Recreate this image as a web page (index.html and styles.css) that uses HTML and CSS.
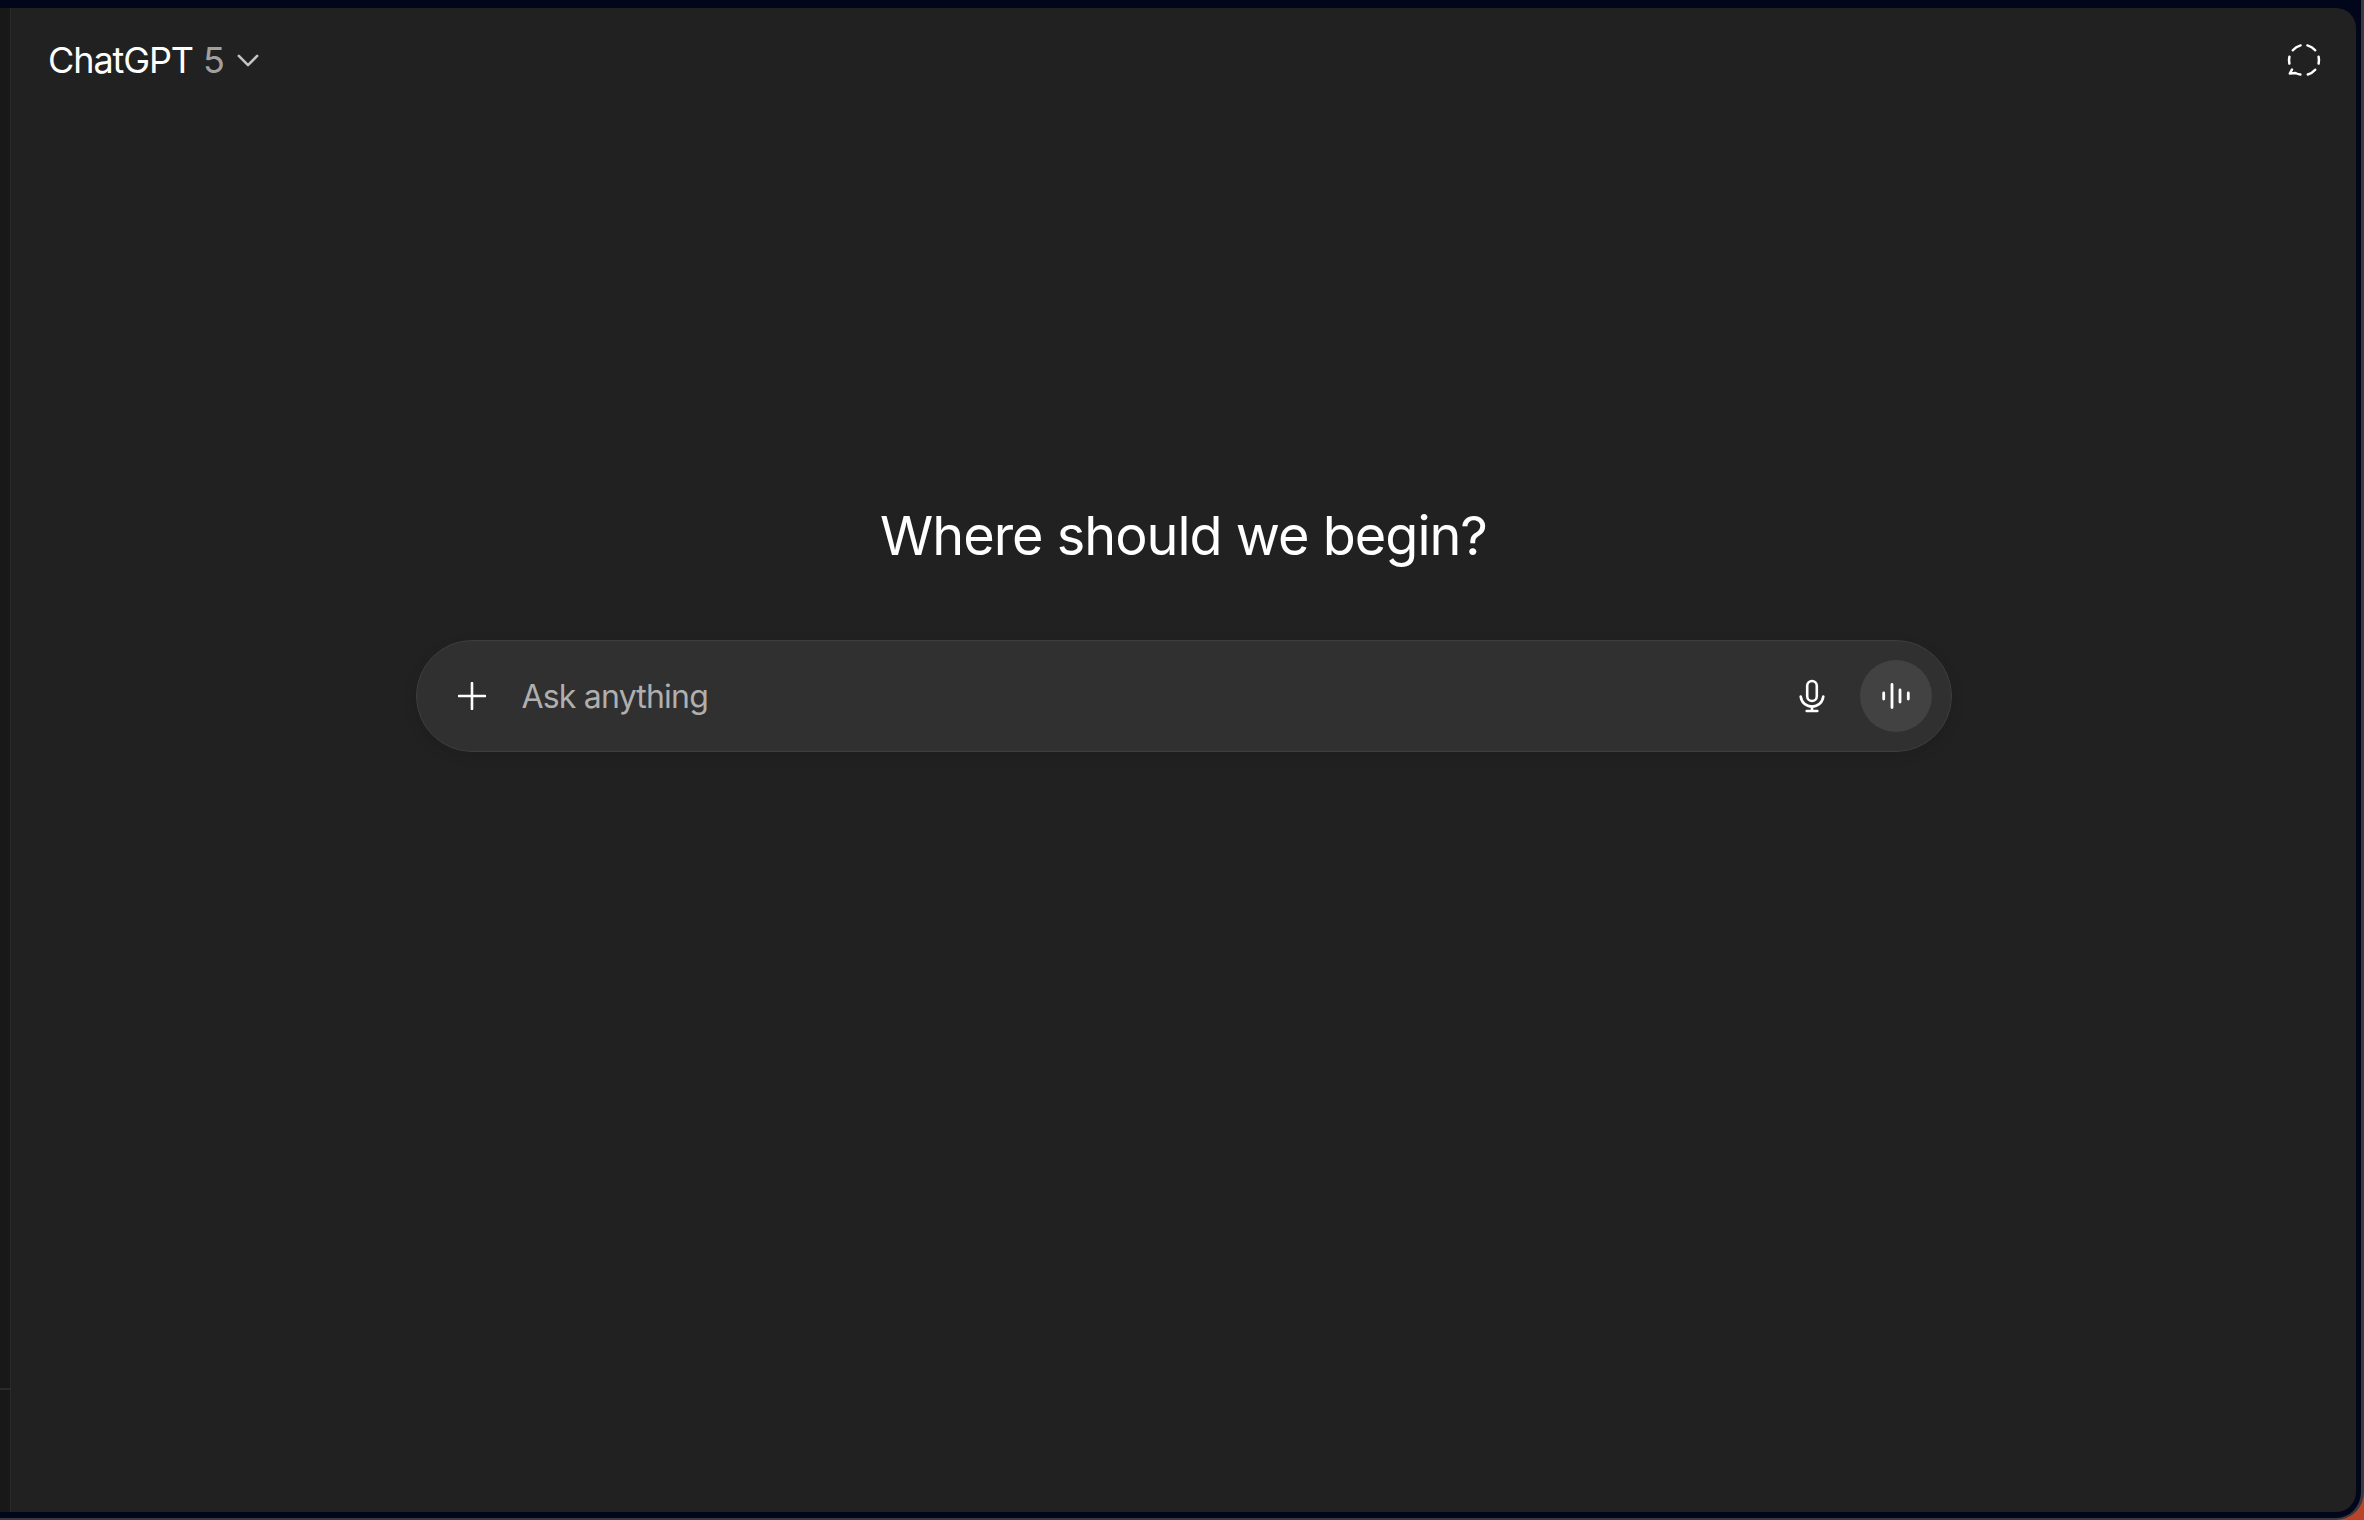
FILE: index.html
```html
<!DOCTYPE html>
<html lang="en">
<head>
    <meta charset="utf-8">
    <meta name="viewport" content="width=device-width, initial-scale=1">
    <title>ChatGPT</title>
    <link rel="stylesheet" href="styles.css">
</head>
<body>
    <div class="frame">
        <aside class="sidebar">
            <div class="sidebar-top"></div>
            <div class="sidebar-bottom"></div>
        </aside>

        <main class="main">
            <header class="topbar">
                <button class="model-btn">
                    <span class="model-name">ChatGPT</span>
                    <span class="model-version">5</span>
                    <svg class="chevron" viewBox="0 0 24 14" fill="none" stroke="#c4c4c4" stroke-width="2.800" stroke-linecap="round" stroke-linejoin="round">
                        <path d="M2 2l10 10L22 2"/>
                    </svg>
                </button>
                <button class="temp-btn" aria-label="Temporary chat">
                    <svg viewBox="0 0 36 36" width="36" height="36" fill="none" stroke="#fff" stroke-width="2.500" stroke-linecap="round" stroke-linejoin="round">
                        <path d="M6.800 8.200A15 15 0 0 1 14.600 3.400"/>
                        <path d="M21.400 3.400A15 15 0 0 1 29.200 8.200"/>
                        <path d="M32.600 14.800A15 15 0 0 1 32.600 21.600"/>
                        <path d="M29.200 27.800A15 15 0 0 1 21.800 32.500"/>
                        <path d="M14.400 32.500A15 15 0 0 1 9.500 31L3.800 31.600 6 27.500"/>
                        <path d="M3.400 21.600A15 15 0 0 1 3.400 14.800"/>
                    </svg>
                </button>
            </header>

            <section class="center">
                <h1 class="title">Where should we begin?</h1>
                <div class="composer">
                    <button class="plus-btn" aria-label="Add files">
                        <svg viewBox="0 0 28 28" width="28" height="28" fill="none" stroke="#fff" stroke-width="2.600" stroke-linecap="round">
                            <path d="M14 1v26M1 14h26"/>
                        </svg>
                    </button>
                    <span class="placeholder">Ask anything</span>
                    <button class="mic-btn" aria-label="Dictate">
                        <svg viewBox="0 0 32 36" width="32" height="36" fill="none" stroke="#fff" stroke-width="2.600" stroke-linecap="round" stroke-linejoin="round">
                            <rect x="11.200" y="3" width="9.600" height="20" rx="4.800"/>
                            <path d="M4.700 18.500C5.500 24.500 10 28.500 16 28.500s10.500-4 11.300-10"/>
                            <path d="M16 28.500V33M10.700 33h10.600"/>
                        </svg>
                    </button>
                    <button class="voice-btn" aria-label="Voice mode">
                        <svg viewBox="0 0 32 28" width="32" height="28" fill="none" stroke="#fff" stroke-width="2.800" stroke-linecap="round">
                            <path d="M3.700 11v6M12 2.500v23M20 8v12M28.300 11v6"/>
                        </svg>
                    </button>
                </div>
            </section>
        </main>
    </div>
</body>
</html>
```

FILE: styles.css
```css
html, body {
    height: 100%;
    margin: 0;
}
body {
    background-color: #b8452a;
    font-family: Inter, "Noto Sans", sans-serif;
    overflow: hidden;
}
button {
    background: none;
    border: none;
    padding: 0;
    color: inherit;
    font: inherit;
    display: flex;
    align-items: center;
    justify-content: center;
}
.frame {
    box-sizing: border-box;
    height: 100%;
    display: flex;
    padding: 8px 5px 6px 0;
    background-color: #02061a;
    border-right: 3px solid #3a3a40;
    border-bottom: 2px solid #3a3a40;
    border-bottom-right-radius: 28px;
}
.sidebar {
    width: 10px;
    flex-shrink: 0;
    display: flex;
    flex-direction: column;
    gap: 2px;
    background-color: #2a2a2a;
}
.sidebar-top {
    height: 1380px;
    background-color: #181818;
}
.sidebar-bottom {
    flex: 1;
    background-color: #181818;
}
.main {
    flex: 1;
    display: flex;
    flex-direction: column;
    background-color: #212121;
    border-left: 1px solid #2a2a2a;
    border-radius: 0 20px 20px 0;
}
.topbar {
    display: flex;
    justify-content: space-between;
    align-items: center;
    height: 104px;
    padding: 0 34px 0 37px;
}
.model-btn {
    gap: 10px;
    font-size: 36px;
    font-weight: 370;
    letter-spacing: -1.1px;
    color: #fff;
}
.model-version {
    color: #a0a0a0;
}
.chevron {
    width: 22px;
    height: 13px;
    margin-left: 3px;
}
.center {
    display: flex;
    flex-direction: column;
    align-items: center;
    padding-top: 386px;
}
.title {
    margin: 0;
    height: 142px;
    line-height: 76px;
    font-size: 54px;
    font-weight: 370;
    letter-spacing: -1px;
    color: #fff;
}
.composer {
    box-sizing: border-box;
    width: 1536px;
    height: 112px;
    display: flex;
    align-items: center;
    padding: 0 19px 0 41px;
    background-color: #303030;
    border: 1px solid #3e3e3e;
    border-radius: 56px;
    box-shadow: 0 4px 14px rgba(0, 0, 0, 0.1);
}
.plus-btn {
    width: 28px;
}
.placeholder {
    flex: 1;
    margin-left: 36px;
    font-size: 32px;
    font-weight: 370;
    letter-spacing: -0.8px;
    color: #afafaf;
}
.mic-btn {
    width: 32px;
}
.voice-btn {
    width: 72px;
    height: 72px;
    margin-left: 32px;
    border-radius: 50%;
    background-color: #424242;
}
```
